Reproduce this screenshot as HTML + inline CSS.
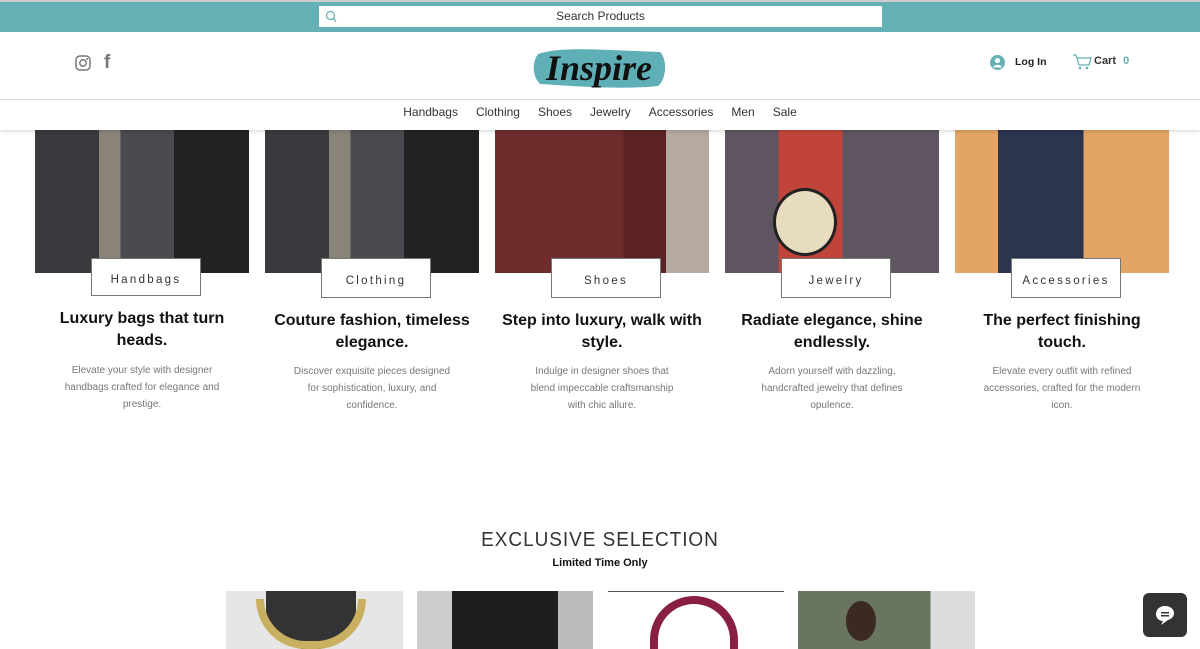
<!DOCTYPE html>
<html style="overflow:hidden"><head><meta charset="utf-8"><style>
*{margin:0;padding:0;box-sizing:border-box}
html,body{width:1200px;height:649px;overflow:hidden}
body{background:#fff;font-family:"Liberation Sans",sans-serif;position:relative}
.abs{position:absolute}
.top{left:0;top:0;width:1200px;height:32px;background:#64b0b4;border-top:2px solid #ccc}
.search{left:319px;top:6px;width:563px;height:21px;background:#fff;font-size:12px;color:#333;text-align:center;line-height:21px}
.hdr{left:0;top:32px;width:1200px;height:68px;background:#fff;border-bottom:1px solid #ddd}
.nav{left:0;top:100px;width:1200px;height:30px;background:#fff;box-shadow:0 2px 3px rgba(0,0,0,.12);text-align:center;font-size:12px;color:#333;line-height:24px;z-index:2}
.nav span{margin:0 9px}
.card{top:130px;width:214px}
.img{width:214px;height:143px;position:relative;overflow:hidden}
.lbl{left:56px;top:128px;width:110px;height:40px;background:#fff;border:1px solid #777;text-align:center;line-height:44px;font-size:11.5px;letter-spacing:2.3px;color:#333}
.h{position:absolute;top:179px;left:12px;width:190px;text-align:center;font-size:16px;font-weight:bold;line-height:22px;color:#111}
.p{position:absolute;top:233px;left:27px;width:160px;text-align:center;font-size:10px;line-height:17px;color:#777}
</style></head><body>
<div class="abs top"></div>
<div class="abs search"><svg class="abs" style="left:6px;top:4px" width="12" height="13"><circle cx="5.5" cy="5.5" r="4" fill="none" stroke="#64b0b4" stroke-width="1.2"/><line x1="8.5" y1="8.5" x2="11" y2="12" stroke="#64b0b4" stroke-width="1.2"/></svg>Search Products</div>
<div class="abs hdr">
<svg class="abs" style="left:75px;top:23px" width="16" height="16"><rect x="1" y="1" width="14" height="14" rx="4" fill="none" stroke="#777" stroke-width="1.5"/><circle cx="8" cy="8" r="3.2" fill="none" stroke="#777" stroke-width="1.5"/><circle cx="12" cy="4" r="1" fill="#777"/></svg>
<div class="abs" style="left:104px;top:20px;font-size:19px;font-weight:bold;color:#777">f</div>
<svg class="abs" style="left:532px;top:8px" width="136" height="54"><path d="M6 14 C30 6 70 10 128 12 C136 20 134 40 126 46 C90 50 40 46 8 44 C0 36 0 22 6 14Z" fill="#5fb0b6"/><text x="14" y="40" font-family="Liberation Serif,serif" font-style="italic" font-size="36" font-weight="bold" fill="#111">Inspire</text></svg>
<svg class="abs" style="left:990px;top:23px" width="15" height="15"><circle cx="7.5" cy="7.5" r="7.5" fill="#64b0b4"/><circle cx="7.5" cy="5.5" r="2.6" fill="#fff"/><path d="M3 12.5 C4 9 11 9 12 12.5" fill="#fff"/></svg>
<div class="abs" style="left:1015px;top:24px;font-size:10.5px;font-weight:bold;color:#222">Log In</div>
<svg class="abs" style="left:1072px;top:21px" width="20" height="17"><path d="M1 2 H4 L7 12 H17 L19 5 H5" fill="none" stroke="#64b0b4" stroke-width="1.3"/><circle cx="8" cy="15" r="1.3" fill="#64b0b4"/><circle cx="15" cy="15" r="1.3" fill="#64b0b4"/></svg>
<div class="abs" style="left:1094px;top:23px;font-size:11px;font-weight:bold;color:#333">Cart <span style="color:#64b0b4;margin-left:4px">0</span></div>
</div>
<div class="abs nav"><span>Handbags</span><span>Clothing</span><span>Shoes</span><span>Jewelry</span><span>Accessories</span><span>Men</span><span>Sale</span></div>

<div class="abs card" style="left:35px"><div class="img" style="background:linear-gradient(90deg,#3a3a3e 0 30%,#8a8378 30% 40%,#4a4a50 40% 65%,#222 65% 100%)"></div><div class="abs lbl" style="top:128px;height:38px;line-height:42px">Handbags</div><div class="h" style="top:178px">Luxury bags that turn heads.</div><div class="p" style="top:232px">Elevate your style with designer handbags crafted for elegance and prestige.</div></div>
<div class="abs card" style="left:265px"><div class="img" style="background:linear-gradient(90deg,#3a3a3e 0 30%,#8a8378 30% 40%,#4a4a50 40% 65%,#222 65% 100%)"></div><div class="abs lbl">Clothing</div><div class="h" style="top:180px;left:2px;width:210px">Couture fashion, timeless elegance.</div><div class="p">Discover exquisite pieces designed for sophistication, luxury, and confidence.</div></div>
<div class="abs card" style="left:495px"><div class="img" style="background:linear-gradient(90deg,#6e2c2c 0 60%,#5a2222 60% 80%,#b5aaa0 80%)"></div><div class="abs lbl">Shoes</div><div class="h" style="top:180px;left:2px;width:210px">Step into luxury, walk with style.</div><div class="p">Indulge in designer shoes that blend impeccable craftsmanship with chic allure.</div></div>
<div class="abs card" style="left:725px"><div class="img" style="background:linear-gradient(90deg,#5e5560 0 25%,#c0443a 25% 55%,#5e5560 55%)"><div class="abs" style="left:48px;top:58px;width:64px;height:68px;border-radius:50%;background:#e8dcc0;border:3px solid #222"></div></div><div class="abs lbl">Jewelry</div><div class="h" style="top:180px;left:2px;width:210px">Radiate elegance, shine endlessly.</div><div class="p">Adorn yourself with dazzling, handcrafted jewelry that defines opulence.</div></div>
<div class="abs card" style="left:955px"><div class="img" style="background:linear-gradient(90deg,#e2a565 0 20%,#2c3550 20% 60%,#e2a565 60%)"></div><div class="abs lbl">Accessories</div><div class="h" style="top:180px;left:17px;width:180px">The perfect finishing touch.</div><div class="p">Elevate every outfit with refined accessories, crafted for the modern icon.</div></div>

<div class="abs" style="left:0;top:529px;width:1200px;text-align:center;font-size:20px;letter-spacing:1px;color:#333;transform:scaleX(0.95)">EXCLUSIVE SELECTION</div>
<div class="abs" style="left:0;top:557px;width:1200px;text-align:center;font-size:11px;font-weight:bold;color:#111">Limited Time Only</div>
<div class="abs" style="left:226px;top:591px;width:177px;height:58px;background:#e6e6e6;overflow:hidden"><div class="abs" style="left:40px;top:0;width:90px;height:58px;background:#333;border-radius:0 0 40px 40px"></div><div class="abs" style="left:30px;top:8px;width:110px;height:50px;border:8px solid #c9b060;border-top:none;border-radius:0 0 55px 55px"></div></div>
<div class="abs" style="left:417px;top:591px;width:176px;height:58px;background:linear-gradient(90deg,#ccc 0 20%,#1e1e1e 20% 80%,#bbb 80%)"></div>
<div class="abs" style="left:608px;top:591px;width:176px;height:58px;background:#fff;border-top:1px solid #555;overflow:hidden"><div class="abs" style="left:42px;top:4px;width:88px;height:80px;border:8px solid #8a1f45;border-radius:45px 45px 0 0;border-bottom:none"></div></div>
<div class="abs" style="left:798px;top:591px;width:177px;height:58px;background:linear-gradient(90deg,#6a7560 0 75%,#ddd 75%);overflow:hidden"><div class="abs" style="left:48px;top:10px;width:30px;height:40px;border-radius:50%;background:#3a2a22"></div></div>
<div class="abs" style="left:1143px;top:593px;width:44px;height:44px;border-radius:6px;background:#333"><svg class="abs" style="left:11px;top:11px" width="22" height="22"><path d="M11 2 C5 2 2 6 2 10 C2 14 5 17 9 17 L7 21 L14 16 C18 15 20 12 20 9 C20 5 16 2 11 2Z" fill="#fff"/><rect x="7" y="8" width="8" height="1.5" fill="#333"/><rect x="7" y="11" width="8" height="1.5" fill="#333"/></svg></div>
</body></html>
